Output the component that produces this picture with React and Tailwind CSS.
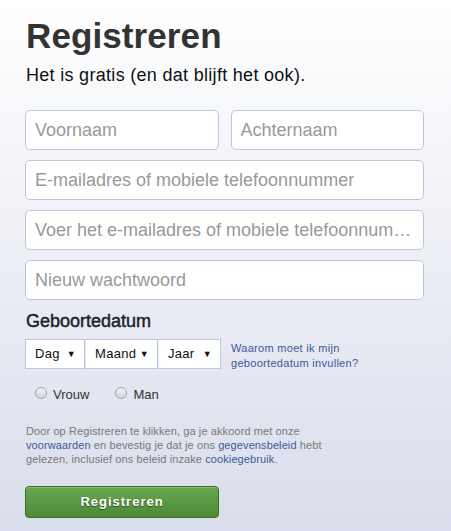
import React from "react";

const Field = ({ placeholder, className = "" }) => (
  <div
    className={`h-10 flex items-center px-[9px] bg-white border border-[#bdc7d8] rounded-[5px] text-[18px] text-[#999] whitespace-nowrap overflow-hidden ${className}`}
  >
    <span className="truncate">{placeholder}</span>
  </div>
);

const Select = ({ label, className = "" }) => (
  <div
    className={`h-[30px] flex items-center justify-between pl-[9px] pr-[8px] bg-white border border-[#bdc7d8] text-[13px] text-[#111] tracking-[0.3px] ${className}`}
  >
    <span>{label}</span>
    <span className="text-[9px] leading-none">▼</span>
  </div>
);

const Radio = ({ label }) => (
  <label className="flex items-center gap-[6px] text-[13px] text-[#333]">
    <span className="w-[12px] h-[12px] rounded-full border border-[#a0a0a0] bg-gradient-to-b from-[#f4f4f4] to-[#d6d6d6]" />
    <span className="pt-[3px]">{label}</span>
  </label>
);

export default function App() {
  return (
    <div
      className="w-[451px] h-[531px] bg-gradient-to-b from-[#ffffff] to-[#d9ddeb] pl-[25px] pr-[27px] pt-[14px]"
      style={{ fontFamily: '"Liberation Sans", Arial, sans-serif' }}
    >
      <h1 className="text-[35px] leading-[44px] font-bold text-[#333] pl-[1px] tracking-[0.1px]">Registreren</h1>
      <p className="text-[18px] leading-[22px] text-[#111] mt-[6px] pl-[1px] tracking-[0.3px]">
        Het is gratis (en dat blijft het ook).
      </p>

      <div className="mt-[24px] flex flex-col gap-[10px]">
        <div className="flex gap-[12px]">
          <Field placeholder="Voornaam" className="flex-1" />
          <Field placeholder="Achternaam" className="flex-1" />
        </div>
        <Field placeholder="E-mailadres of mobiele telefoonnummer" />
        <Field placeholder="Voer het e-mailadres of mobiele telefoonnummer opnieuw in" />
        <Field placeholder="Nieuw wachtwoord" />
      </div>

      <h2 className="mt-[10px] text-[18px] leading-[22px] font-normal text-[#1d2129] pl-[1px] [-webkit-text-stroke:0.45px_#1d2129]">
        Geboortedatum
      </h2>
      <div className="mt-[7px] flex items-start">
        <Select label="Dag" className="w-[60px]" />
        <Select label="Maand" className="w-[72px] border-l-0 ml-[1px]" />
        <Select label="Jaar" className="w-[62px] border-l-0 ml-[1px]" />
        <a className="ml-[10px] text-[11px] leading-[15px] text-[#3b5998] pt-[2px] tracking-[0.3px]">
          Waarom moet ik mijn
          <br />
          geboortedatum invullen?
        </a>
      </div>

      <div className="mt-[11px] flex gap-[26px] pl-[10px]">
        <Radio label="Vrouw" />
        <Radio label="Man" />
      </div>

      <p className="mt-[19px] text-[11px] leading-[14px] text-[#777] pl-[1px] tracking-[0.1px]">
        Door op Registreren te klikken, ga je akkoord met onze
        <br />
        <span className="text-[#3b5998]">voorwaarden</span> en bevestig je dat je ons{" "}
        <span className="text-[#3b5998]">gegevensbeleid</span> hebt
        <br />
        gelezen, inclusief ons beleid inzake{" "}
        <span className="text-[#3b5998]">cookiegebruik</span>.
      </p>

      <button className="mt-[20px] w-[194px] h-[32px] rounded-[4px] border border-[#3b6e22] bg-gradient-to-b from-[#69a74e] to-[#4e8a37] text-white text-[13px] font-bold tracking-[1px] [text-shadow:0_1px_1px_rgba(0,0,0,0.5)] shadow-[inset_0_1px_0_rgba(255,255,255,0.25)]">
        Registreren
      </button>
    </div>
  );
}
